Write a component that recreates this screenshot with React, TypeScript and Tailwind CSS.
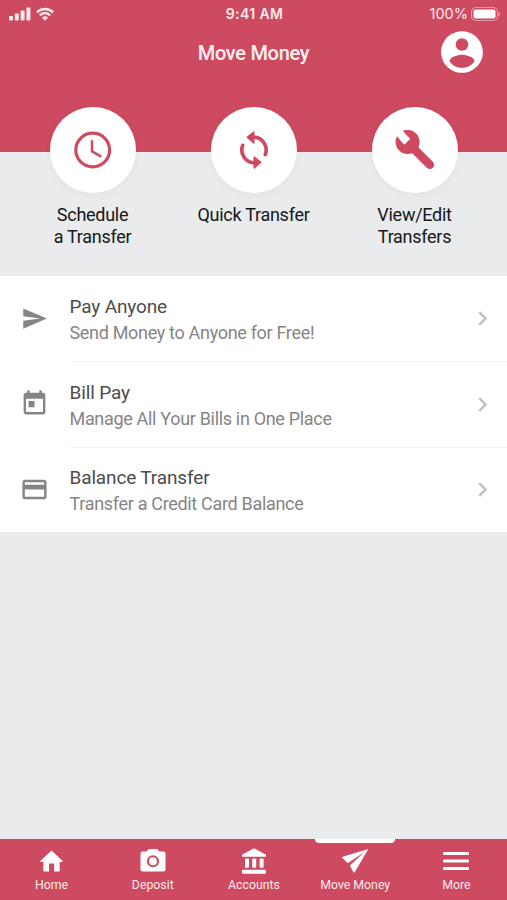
import React from 'react';
import type { IconType } from 'react-icons';
import { MdChevronRight, MdCreditCard, MdSend, MdToday } from 'react-icons/md';

interface QuickAction {
    lines: string[];
    icon: React.ReactNode;
}

interface MenuItem {
    title: string;
    description: string;
    icon: IconType;
    iconClass: string;
}

interface Tab {
    label: string;
    icon: React.ReactNode;
    active?: boolean;
}

const ClockIcon = () => (
    <svg viewBox="0 0 38 38" className="size-[38px]" fill="none" stroke="currentColor">
        <circle cx="18.700" cy="19" r="16.900" strokeWidth="3.200" />
        <path d="M18 10.200v10.200l8.400 4.700" strokeWidth="2.500" strokeLinecap="round" strokeLinejoin="round" />
    </svg>
);

const SyncIcon = () => (
    <svg viewBox="0 0 40 40" className="size-10" fill="none" stroke="currentColor">
        <path d="M19.500 7.200A12.800 12.800 0 0 1 31.300 24.600" strokeWidth="3.700" strokeLinecap="round" />
        <path d="M20.500 32.800A12.800 12.800 0 0 1 8.700 15.400" strokeWidth="3.700" strokeLinecap="round" />
        <path d="M19.800 2v11L13.200 7.300z" fill="currentColor" strokeWidth="1.400" strokeLinejoin="round" />
        <path d="M20.200 27v11l6.600-5.700z" fill="currentColor" strokeWidth="1.400" strokeLinejoin="round" />
    </svg>
);

const WrenchIcon = () => (
    <svg viewBox="0 0 40 40" className="size-10">
        <circle cx="12.600" cy="11.900" r="12" fill="currentColor" />
        <path d="M-3 .500 2.500-4.500 14.500 8q.8.800 0 1.600l-4.400 4.400q-.8.800-1.600 0z" fill="#fff" />
        <path d="m17 17 17.800 17.800" stroke="currentColor" strokeWidth="8.600" strokeLinecap="round" />
    </svg>
);

const AccountIcon = () => (
    <svg viewBox="0 0 24 24" className="size-[50px]" fill="currentColor">
        <path d="M12 2C6.480 2 2 6.480 2 12s4.480 10 10 10 10-4.480 10-10S17.520 2 12 2zm0 3.400c1.660 0 3 1.340 3 3s-1.340 3-3 3-3-1.340-3-3 1.340-3 3-3zm0 14.200c-2.500 0-4.710-1.280-6-3.220.03-1.990 4-3.080 6-3.080 1.990 0 5.970 1.090 6 3.080-1.290 1.940-3.500 3.220-6 3.220z" />
    </svg>
);

const HomeIcon = () => (
    <svg viewBox="0 0 23 22" className="h-[22px] w-[23px]" fill="currentColor">
        <path d="M11.500.5 22.700 11q.5.900-.5 1.100h-2.500v8.600q0 .8-.8.800h-4.800v-8H9v8H4.200q-.8 0-.8-.8v-8.600H.8q-1-.2-.5-1.100z" />
    </svg>
);

const CameraIcon = () => (
    <svg viewBox="0 0 26 24" className="mb-[3px] h-6 w-[26px]" fill="none">
        <path fill="currentColor" d="M9.500.9h7q.7 0 1.200.6l1.600 1.900h4.200a2 2 0 0 1 2 2v16a2 2 0 0 1-2 2h-21a2 2 0 0 1-2-2v-16a2 2 0 0 1 2-2h4.200l1.600-1.900q.5-.6 1.200-.6z" />
        <circle cx="13" cy="13.300" r="5" stroke="#cd4a61" strokeWidth="2.100" />
    </svg>
);

const BankIcon = () => (
    <svg viewBox="0 0 26 26" className="size-[26px]" fill="currentColor">
        <path d="M12.400.6q.6-.3 1.200 0L24.500 6.500q.5.300.5.900v.6q0 .7-.7.700H1.700Q1 8.700 1 8v-.6q0-.6.500-.9z" />
        <rect x="4" y="10.500" width="4" height="9.300" rx="1" />
        <rect x="11.200" y="10.500" width="4" height="9.300" rx="1" />
        <rect x="18.600" y="10.500" width="4" height="9.300" rx="1" />
        <rect x="1" y="21.800" width="24" height="4" rx="1" />
    </svg>
);

const PlaneIcon = () => (
    <svg viewBox="0 0 26 24" className="h-6 w-[26px]" fill="currentColor">
        <path d="M25.600.3.700 7.800q-.8.400-.3 1.100l4.900 4.900q.5.400 1.100 0L22.500 3.100 8.400 16q-.5.500-.3 1.100l3.300 6.200q.7.800 1.300 0L25.900.7q.1-.4-.3-.4z" />
    </svg>
);

const MenuIcon = () => (
    <svg viewBox="0 0 26 18" className="h-[18px] w-[26px]" fill="currentColor">
        <rect width="26" height="3" rx="1" />
        <rect y="7.500" width="26" height="3" rx="1" />
        <rect y="15" width="26" height="3" rx="1" />
    </svg>
);

const quickActions: QuickAction[] = [
    { lines: ['Schedule', 'a Transfer'], icon: <ClockIcon /> },
    { lines: ['Quick Transfer'], icon: <SyncIcon /> },
    { lines: ['View/Edit', 'Transfers'], icon: <WrenchIcon /> },
];

const menuItems: MenuItem[] = [
    { title: 'Pay Anyone', description: 'Send Money to Anyone for Free!', icon: MdSend, iconClass: 'size-[27px]' },
    { title: 'Bill Pay', description: 'Manage All Your Bills in One Place', icon: MdToday, iconClass: 'size-[29px]' },
    { title: 'Balance Transfer', description: 'Transfer a Credit Card Balance', icon: MdCreditCard, iconClass: 'size-[29px]' },
];

const tabs: Tab[] = [
    { label: 'Home', icon: <HomeIcon /> },
    { label: 'Deposit', icon: <CameraIcon /> },
    { label: 'Accounts', icon: <BankIcon /> },
    { label: 'Move Money', icon: <PlaneIcon />, active: true },
    { label: 'More', icon: <MenuIcon /> },
];

const StatusBar = () => (
    <div className="grid h-7 grid-cols-3 items-center pl-[9px] pr-[7px] text-[#ffe9ec]">
        <div className="flex items-center gap-[5px]">
            <svg viewBox="0 0 22 14" className="mb-px h-3.5 w-[22px]" fill="currentColor">
                <rect x="0" y="9" width="4" height="4.500" rx="1" />
                <rect x="5.800" y="6.500" width="4" height="7" rx="1" />
                <rect x="11.600" y="3.500" width="4" height="10" rx="1" />
                <rect x="17.400" y="0.500" width="4" height="13" rx="1" />
            </svg>
            <svg viewBox="0 0 18 14" className="mb-px h-3.5 w-[18px]" fill="none" stroke="currentColor" strokeWidth="2.400">
                <path d="M.9 5.300a11.500 11.500 0 0 1 16.200 0" />
                <path d="M3.800 8.300a7.400 7.400 0 0 1 10.400 0" />
                <path fill="currentColor" stroke="none" d="M9 13.700 6 10.700a4.300 4.300 0 0 1 6 0z" />
            </svg>
        </div>
        <span className="text-center font-['Inter',sans-serif] text-[14px] font-semibold leading-none tracking-[0.400px]">9:41 AM</span>
        <div className="flex items-center justify-end gap-[3px]">
            <span className="font-['Inter',sans-serif] text-[14.500px] leading-none">100%</span>
            <svg viewBox="0 0 29 14" className="mb-px h-3.5 w-[29px]" fill="none">
                <rect x=".5" y=".5" width="26" height="13" rx="4" stroke="currentColor" strokeOpacity=".5" />
                <rect x="2.500" y="2.500" width="22" height="9" rx="2" fill="#fff" />
                <path d="M27.500 4.500v5a2.800 2.800 0 0 0 0-5z" fill="currentColor" fillOpacity=".5" />
            </svg>
        </div>
    </div>
);

const App: React.FC = () => {
    return (
        <div className="flex h-[900px] w-[507px] flex-col overflow-hidden bg-[#e9ebec] font-['Roboto',sans-serif]">
            <header className="h-[151.500px] shrink-0 bg-[#cd4a61]">
                <StatusBar />
                <div className="-mt-px grid h-12 grid-cols-[1fr_auto_1fr] items-center pr-5">
                    <span />
                    <h1 className="pl-5 pt-px text-[20px] font-medium tracking-[-0.300px] text-[#fff1f2]">Move Money</h1>
                    <span className="justify-self-end text-white">
                        <AccountIcon />
                    </span>
                </div>
            </header>

            <section className="-mt-[44.500px] grid h-[169px] shrink-0 grid-cols-3 px-3">
                {quickActions.map(({ lines, icon }) => (
                    <button key={lines[0]} className="flex flex-col items-center text-[18px] leading-[22.500px] tracking-[-0.280px] text-[#161719]">
                        <span className="mb-[10.500px] flex size-[86px] items-center justify-center rounded-full bg-white text-[#cd4a61] shadow-[0_2px_8px_rgba(0,0,0,0.04)]">
                            {icon}
                        </span>
                        {lines.map((line) => (
                            <span key={line}>{line}</span>
                        ))}
                    </button>
                ))}
            </section>

            <ul className="shrink-0 bg-white">
                {menuItems.map(({ title, description, icon: Icon, iconClass }, i) => (
                    <li key={title} className="flex h-[85.300px] items-center pl-5">
                        <span className="mr-[20.500px] flex w-[29px] shrink-0 justify-center text-[#858585]">
                            <Icon className={iconClass} />
                        </span>
                        <div className={`flex h-full flex-1 items-center justify-between pr-[10px] ${i > 0 ? 'border-t border-[#f3f4f4]' : ''}`}>
                            <div className="pt-[2.500px]">
                                <p className="text-[19px] leading-[26px] tracking-[-0.140px] text-[#4c4c4c]">{title}</p>
                                <p className="text-[18px] leading-[26px] tracking-[-0.320px] text-[#858585]">{description}</p>
                            </div>
                            <MdChevronRight className="size-[29px] text-[#bfbfbf]" />
                        </div>
                    </li>
                ))}
            </ul>

            <nav className="mt-auto grid h-[61px] shrink-0 grid-cols-5 bg-[#cd4a61] pl-px text-white">
                {tabs.map(({ label, icon, active }) => (
                    <button key={label} className="relative flex flex-col items-center pt-2">
                        {active && <span className="absolute top-0 h-1 w-20 rounded-b bg-white" />}
                        <span className="flex h-7 items-center justify-center">{icon}</span>
                        <span className="mt-0.5 whitespace-nowrap text-[12.300px] leading-4 text-[#ffe9ec]">{label}</span>
                    </button>
                ))}
            </nav>
        </div>
    );
};

export default App;
